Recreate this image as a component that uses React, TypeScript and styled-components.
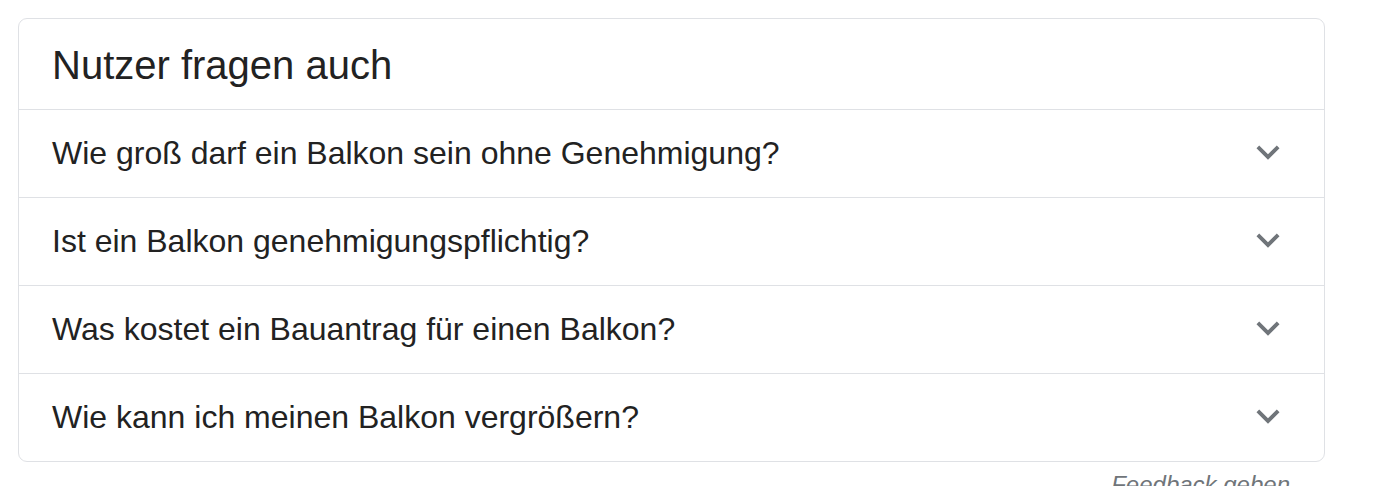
import React from "react";
import styled, { createGlobalStyle } from "styled-components";

const Global = createGlobalStyle`
  html, body { margin: 0; padding: 0; background: #fff; }
  body { font-family: "Liberation Sans", Arial, Helvetica, sans-serif; }
`;

const Page = styled.div`
  padding: 18px 0 0 18px;
  width: 1307px;
`;

const Card = styled.div`
  border: 1px solid #dfe1e5;
  border-radius: 9px;
  overflow: hidden;
  background: #fff;
`;

const Header = styled.div`
  padding: 24px 0 22px 33px;
  font-size: 40px;
  line-height: 44px;
  color: #222;
  border-bottom: 1px solid #dfe1e5;
`;

const Row = styled.div<{ $last?: boolean }>`
  display: flex;
  align-items: center;
  justify-content: space-between;
  height: 87px;
  padding: 0 33px 0 33px;
  border-bottom: ${(p) => (p.$last ? "none" : "1px solid #dfe1e5")};
`;

const Question = styled.span`
  font-size: 32px;
  line-height: 34px;
  color: #222;
  margin-bottom: 2px;
`;

const Chevron = styled.svg`
  width: 46px;
  height: 46px;
  fill: #70757a;
  flex: none;
  margin-bottom: 4px;
`;

const Footer = styled.div`
  display: flex;
  justify-content: flex-end;
  padding: 9px 35px 0 0;
`;

const Feedback = styled.span`
  font-size: 24px;
  line-height: 28px;
  font-style: italic;
  color: #70757a;
`;

const questions = [
  "Wie groß darf ein Balkon sein ohne Genehmigung?",
  "Ist ein Balkon genehmigungspflichtig?",
  "Was kostet ein Bauantrag für einen Balkon?",
  "Wie kann ich meinen Balkon vergrößern?",
];

export default function App() {
  return (
    <>
      <Global />
      <Page>
        <Card>
          <Header>Nutzer fragen auch</Header>
          {questions.map((q, i) => (
            <Row key={q} $last={i === questions.length - 1}>
              <Question>{q}</Question>
              <Chevron viewBox="0 0 24 24">
                <path d="M16.59 8.59L12 13.17 7.41 8.59 6 10l6 6 6-6z" />
              </Chevron>
            </Row>
          ))}
        </Card>
        <Footer>
          <Feedback>Feedback geben</Feedback>
        </Footer>
      </Page>
    </>
  );
}
